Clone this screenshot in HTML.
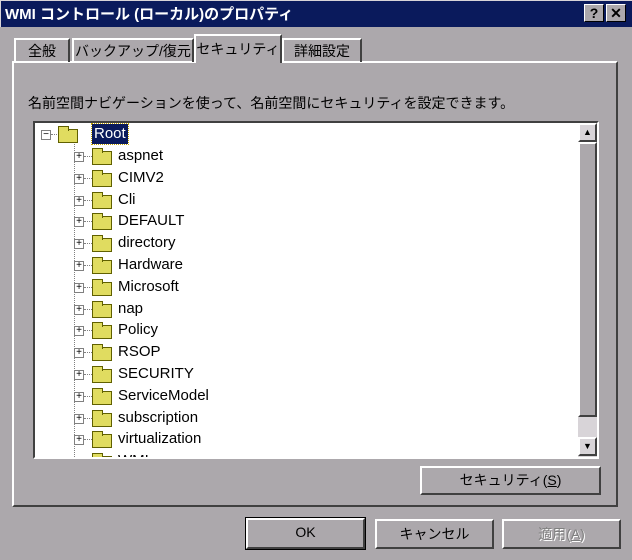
<!DOCTYPE html>
<html><head><meta charset="utf-8"><style>
*{margin:0;padding:0;box-sizing:border-box}
body{width:632px;height:560px;background:#aca8ac;font-family:"Liberation Sans","Noto Sans CJK JP",sans-serif;font-size:14px;color:#000;position:relative;overflow:hidden}
.abs{position:absolute}
.title{left:0;top:0;width:632px;height:27px;background:#0a1a5c;color:#fff;font-weight:bold;font-size:15px;line-height:27px;padding-left:4px;border-top:1px solid #d8d4d8;border-left:1px solid #d8d4d8}
.tb{top:4px;width:20px;height:18px;background:#aca8ac;border:1px solid;border-color:#fff #000 #000 #fff;color:#000;font-weight:bold;font-size:14px;line-height:16px;text-align:center}
.tab{top:38px;height:24px;border:2px solid;border-color:#fff #404040 transparent #fff;border-bottom:none;line-height:22px;text-align:center;font-size:14px}
.panel{left:12px;top:61px;width:606px;height:446px;border:2px solid;border-color:#fff #404040 #404040 #fff}
.tree{left:33px;top:121px;width:566px;height:338px;background:#fff;border:2px solid;border-color:#404040 #fff #fff #404040;overflow:hidden}
.btn{border:2px solid;border-color:#fff #404040 #404040 #fff;text-align:center;font-size:14px}
.row{position:absolute;height:20px;line-height:20px;font-size:15px}
.box{position:absolute;width:10px;height:10px;border:1px solid #808080;background:#fff;font-size:10px;line-height:8px;text-align:center;color:#000}
.fold{position:absolute;width:20px;height:14px;background:#e0dc60;border:1px solid #606000}
.fold:before{content:"";position:absolute;left:-1px;top:-4px;width:9px;height:4px;background:#e0dc60;border:1px solid #606000;border-bottom:none}
.dv{position:absolute;border-left:1px dotted #808080}
.dh{position:absolute;border-top:1px dotted #808080;width:8px}
</style></head><body>
<div class="abs title">WMI コントロール (ローカル)のプロパティ</div>
<div class="abs tb" style="left:584px">?</div>
<div class="abs tb" style="left:606px">✕</div>
<div class="abs panel"></div>
<div class="abs tab" style="left:14px;width:56px">全般</div>
<div class="abs tab" style="left:72px;width:122px">バックアップ/復元</div>
<div class="abs tab" style="left:194px;top:34px;height:29px;width:88px;background:#aca8ac;line-height:26px">セキュリティ</div>
<div class="abs tab" style="left:282px;width:80px">詳細設定</div>
<div class="abs" style="left:28px;top:93px;font-size:14px">名前空間ナビゲーションを使って、名前空間にセキュリティを設定できます。</div>
<div class="abs tree">
<div class="dv" style="left:39px;top:18px;height:320px"></div>
<div class="box" style="left:6px;top:7px">−</div><div class="dh" style="left:16px;top:11px"></div>
<div class="fold" style="left:23px;top:6px"></div>
<div class="row" style="left:57px;top:1px;background:#0a1a5c;color:#fff;padding:0 2px;outline:1px dotted #c0a000">Root</div>
</div>
<div class="abs" style="left:578px;top:123px;width:19px;height:334px;background:#d8d4d8"></div>
<div class="abs btn" style="left:578px;top:123px;width:19px;height:19px;font-size:9px;line-height:15px">▲</div>
<div class="abs btn" style="left:578px;top:142px;width:19px;height:275px;background:#aca8ac"></div>
<div class="abs btn" style="left:578px;top:437px;width:19px;height:19px;font-size:9px;line-height:15px">▼</div>
<div class="abs btn" style="left:420px;top:466px;width:181px;height:29px;line-height:25px">セキュリティ(<u>S</u>)</div>
<div class="abs btn" style="left:246px;top:518px;width:119px;height:31px;line-height:25px;outline:1px solid #000">OK</div>
<div class="abs btn" style="left:375px;top:519px;width:119px;height:30px;line-height:26px">キャンセル</div>
<div class="abs btn" style="left:502px;top:519px;width:119px;height:30px;line-height:26px;color:#808080;text-shadow:1px 1px #fff">適用(<u>A</u>)</div>
<script>
var n=["aspnet","CIMV2","Cli","DEFAULT","directory","Hardware","Microsoft","nap","Policy","RSOP","SECURITY","ServiceModel","subscription","virtualization","WMI"];
var t=document.querySelector('.tree'),h='';
n.forEach(function(s,i){var y=23+i*21.8;
h+='<div class="box" style="left:39px;top:'+(y+6)+'px">+</div><div class="dh" style="left:49px;top:'+(y+10)+'px"></div><div class="fold" style="left:57px;top:'+(y+5)+'px"></div><div class="row" style="left:83px;top:'+y+'px">'+s+'</div>';});
t.innerHTML+=h;
</script>
</body></html>
